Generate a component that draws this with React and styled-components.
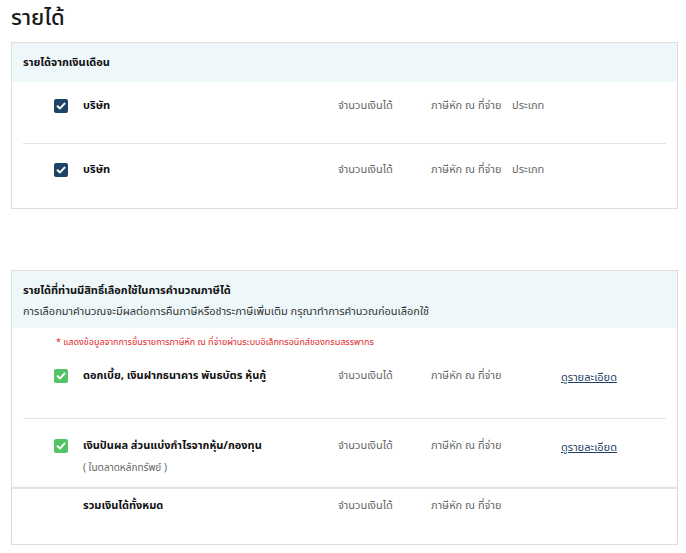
import styled, { createGlobalStyle } from 'styled-components'

const Global = createGlobalStyle`
    body {
        margin: 0;
        background: #fff;
        font-family: "Noto Sans Thai", "Noto Sans", "Liberation Sans", sans-serif;
        color: #222;
    }
`;

const Page = styled.div`
    padding: 0 8px 0 11px;
`;

const Title = styled.h1`
    margin: 0;
    padding-top: 2px;
    height: 40px;
    font-size: 22px;
    font-weight: 500;
    line-height: 34px;
    color: #1a1a1a;
`;

const Card = styled.section`
    border: 1px solid #dedede;
    background: #fff;
    margin-bottom: ${(props) => props.$gap || 0}px;
`;

const Header = styled.div`
    background: #eef8fa;
    padding: ${(props) => props.$pad || '13px 11px 12px'};
    min-height: ${(props) => props.$h || 14}px;
`;

const HeaderTitle = styled.div`
    font-size: 11px;
    font-weight: 700;
    line-height: 14px;
    color: #111;
`;

const HeaderSub = styled.div`
    font-size: 11px;
    line-height: 14px;
    margin-top: 7px;
    color: #333;
`;

const Note = styled.div`
    color: #e0262b;
    font-size: 9px;
    padding: 7px 0 0 44px;
    height: 17px;
`;

const Row = styled.div`
    margin: 0 11px;
    padding: ${(props) => props.$pad || '16px 0 0 31px'};
    height: ${(props) => props.$h}px;
    box-sizing: border-box;
    border-bottom: ${(props) => (props.$last ? 'none' : '1px solid #e2e2e2')};
    display: grid;
    grid-template-columns: ${(props) => props.$cols};
    align-items: start;
    font-size: 11px;
    line-height: 14px;
`;

const Box = styled.span`
    width: 14px;
    height: 14px;
    border-radius: 2px;
    background: ${(props) => props.$color};
    display: flex;
    align-items: center;
    justify-content: center;
`;

const Label = styled.div`
    font-weight: 700;
    color: #111;
`;

const SubLabel = styled.div`
    font-weight: 400;
    color: #666;
    font-size: 10px;
    margin-top: 8px;
`;

const Col = styled.div`
    color: #666;
`;

const Link = styled.a`
    color: #1f3f66;
    text-decoration: underline;
    font-size: 11px;
    margin-top: 2px;
`;

const Total = styled.div`
    border-top: 2px solid #e4e4e4;
    box-shadow: 0 -1px 2px rgba(0, 0, 0, 0.04);
`;

function Check({ color }) {
    return (
        <Box $color={color}>
            <svg width="10" height="10" viewBox="0 0 10 10">
                <path d="M1.6 5.2 L4 7.4 L8.5 2.6" fill="none" stroke="#fff" strokeWidth="2" strokeLinecap="round" strokeLinejoin="round" />
            </svg>
        </Box>
    );
}

const salaryCols = '29px 255px 93px 81px 1fr';
const optCols = '29px 255px 93px 130px 1fr';

export default function App() {
    return (
        <Page>
            <Global />
            <Title>รายได้</Title>
            <Card $gap={61}>
                <Header>
                    <HeaderTitle>รายได้จากเงินเดือน</HeaderTitle>
                </Header>
                <Row $cols={salaryCols} $h={62} $pad="17px 0 0 31px">
                    <Check color="#1d4466" />
                    <Label>บริษัท</Label>
                    <Col>จำนวนเงินได้</Col>
                    <Col>ภาษีหัก ณ ที่จ่าย</Col>
                    <Col>ประเภท</Col>
                </Row>
                <Row $cols={salaryCols} $h={64} $pad="19px 0 0 31px" $last>
                    <Check color="#1d4466" />
                    <Label>บริษัท</Label>
                    <Col>จำนวนเงินได้</Col>
                    <Col>ภาษีหัก ณ ที่จ่าย</Col>
                    <Col>ประเภท</Col>
                </Row>
            </Card>
            <Card>
                <Header $pad="13px 11px 9px">
                    <HeaderTitle>รายได้ที่ท่านมีสิทธิ์เลือกใช้ในการคำนวณภาษีได้</HeaderTitle>
                    <HeaderSub>การเลือกมาคำนวณจะมีผลต่อการคืนภาษีหรือชำระภาษีเพิ่มเติม กรุณาทำการคำนวณก่อนเลือกใช้</HeaderSub>
                </Header>
                <Note>* แสดงข้อมูลจากการยื่นรายการภาษีหัก ณ ที่จ่ายผ่านระบบอิเล็กทรอนิกส์ของกรมสรรพากร</Note>
                <Row $cols={optCols} $h={67} $pad="17px 0 0 31px">
                    <Check color="#52c466" />
                    <Label>ดอกเบี้ย, เงินฝากธนาคาร พันธบัตร หุ้นกู้</Label>
                    <Col>จำนวนเงินได้</Col>
                    <Col>ภาษีหัก ณ ที่จ่าย</Col>
                    <Link href="#">ดูรายละเอียด</Link>
                </Row>
                <Row $cols={optCols} $h={68} $pad="20px 0 0 31px" $last>
                    <Check color="#52c466" />
                    <Label>
                        เงินปันผล ส่วนแบ่งกำไรจากหุ้น/กองทุน
                        <SubLabel>( ในตลาดหลักทรัพย์ )</SubLabel>
                    </Label>
                    <Col>จำนวนเงินได้</Col>
                    <Col>ภาษีหัก ณ ที่จ่าย</Col>
                    <Link href="#">ดูรายละเอียด</Link>
                </Row>
                <Total>
                    <Row $cols={optCols} $h={55} $pad="10px 0 0 31px" $last>
                        <span />
                        <Label>รวมเงินได้ทั้งหมด</Label>
                        <Col>จำนวนเงินได้</Col>
                        <Col>ภาษีหัก ณ ที่จ่าย</Col>
                        <span />
                    </Row>
                </Total>
            </Card>
        </Page>
    );
}
